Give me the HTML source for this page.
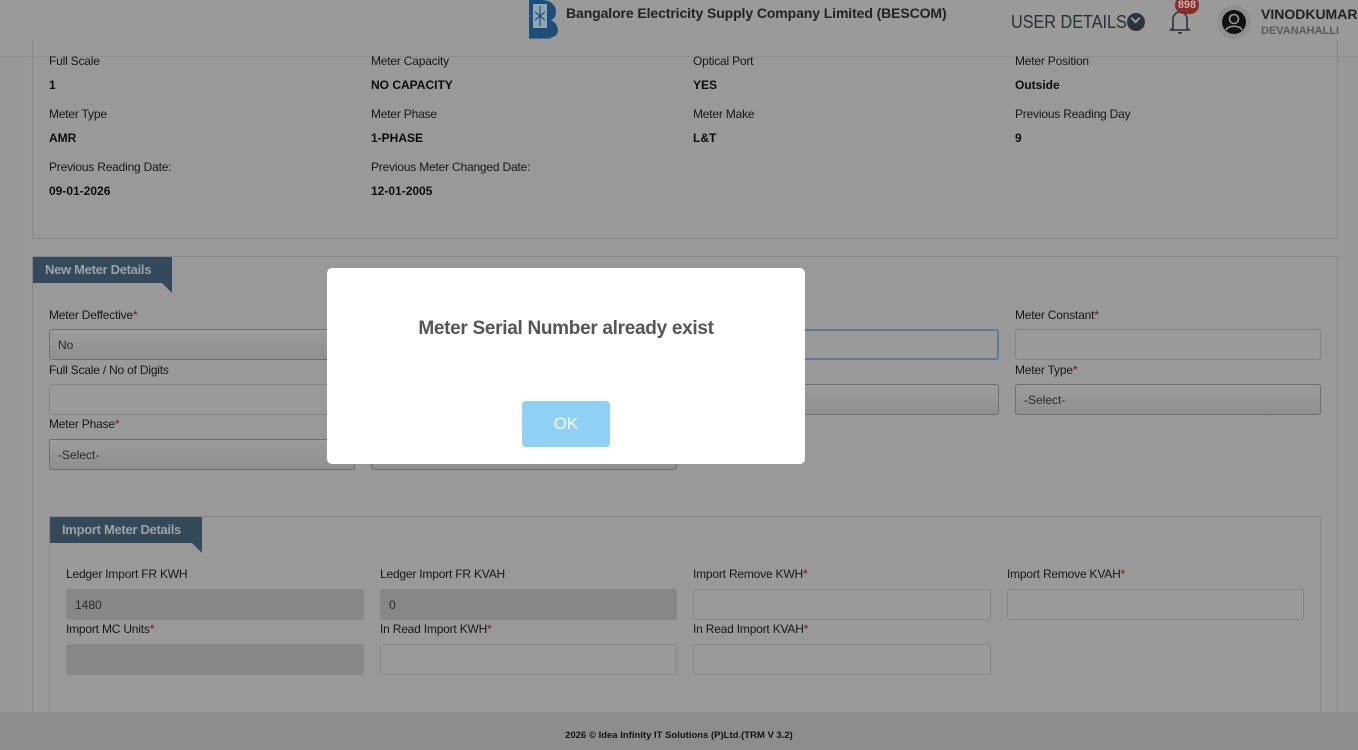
<!DOCTYPE html>
<html style="width:1358px;height:750px;overflow:hidden"><head><meta charset="utf-8"><style>
*{box-sizing:border-box;margin:0;padding:0}
body{width:1358px;height:750px;overflow:hidden;background:#969696;font-family:"Liberation Sans",sans-serif;position:relative;color:#111}
.a{position:absolute}
.lbl{position:absolute;font-size:12px;color:#161616;letter-spacing:-0.2px}
.val{position:absolute;font-size:12px;font-weight:bold;color:#0a0a0a}
.req{color:#7a1010}
.in{position:absolute;height:31px;border:1px solid #858585;border-radius:3px;background:#9a9a9a;font-size:12px;color:#2a2a2a;padding:8px 8px}
.sel{background:linear-gradient(#9c9c9c,#8f8f8f);border-color:#6e6e6e}
.dis{background:#878788;border-color:#878788}
.tab{position:absolute;background:#34495a;color:#9aa3a8;font-weight:bold;font-size:13px;padding:0 12px;height:26px;line-height:26px;letter-spacing:-0.3px}
.tab:after{content:"";position:absolute;right:0;bottom:-10px;border-top:10px solid #34495a;border-left:10px solid transparent}
</style></head><body>
<div class="a" style="left:0;top:0;width:1358px;height:57px;background:#9a9a9a;border-bottom:1px solid #8e8e8e"></div>
<div class="a" style="left:24px;top:57px;width:1320px;height:655px;background:#999"></div>
<div class="a" style="left:32px;top:40px;width:1306px;height:199px;border:1px solid #878787;border-top:none"></div>
<!-- header -->
<svg class="a" style="left:528px;top:0" width="34" height="40" viewBox="0 0 34 40"><path d="M1 0h12c10 0 15 5 15 12c0 4-2 7-5 8c4 2 7 6 7 10c0 6-5 8-12 8H1z" fill="#1c4e78"/><rect x="5" y="4" width="14" height="24" fill="#8fa6b8"/><path d="M12 6v20M7 12l10 8M17 12l-10 8" stroke="#1c4e78" stroke-width="1.2"/><text x="1" y="39" font-size="5" font-weight="bold" fill="#1c4e78" font-family="Liberation Sans">BESCOM</text></svg>
<div class="a" style="left:566px;top:5px;font-size:14px;font-weight:bold;color:#222;letter-spacing:-0.1px">Bangalore Electricity Supply Company Limited (BESCOM)</div>
<div class="a" style="left:1011px;top:12px;font-size:18px;color:#2a2f36;transform:scaleX(0.9);transform-origin:left">USER DETAILS</div>
<div class="a" style="left:1127px;top:13px;width:18px;height:18px;border-radius:50%;background:#2c333a"></div>
<div class="a" style="left:1132px;top:15px;width:7px;height:7px;border-right:2px solid #999;border-bottom:2px solid #999;transform:rotate(45deg)"></div>
<svg class="a" style="left:1168px;top:8px" width="24" height="28" viewBox="0 0 24 28"><path d="M5 20V11a7 7 0 0 1 14 0v9l2 2H3z" fill="none" stroke="#2d333a" stroke-width="1.6"/><path d="M10 24a2 2 0 0 0 4 0" fill="#2d333a"/></svg>
<div class="a" style="left:1175px;top:-4px;width:24px;height:18px;border-radius:9px;background:#8e2a2a;color:#c9b0b0;font-size:11px;font-weight:bold;text-align:center;line-height:18px">898</div>
<div class="a" style="left:1217px;top:5px;width:34px;height:34px;border-radius:50%;background:#909090"></div>
<svg class="a" style="left:1221px;top:9px" width="26" height="26" viewBox="0 0 26 26"><circle cx="13" cy="13" r="12" fill="#111"/><circle cx="13" cy="10" r="4.5" fill="none" stroke="#999" stroke-width="1.6"/><path d="M5 21c2-5 14-5 16 0" fill="none" stroke="#999" stroke-width="1.6"/></svg>
<div class="a" style="left:1261px;top:6px;font-size:14px;font-weight:bold;color:#222">VINODKUMAR</div>
<div class="a" style="left:1261px;top:25px;font-size:11px;font-weight:bold;color:#5a5a5a">DEVANAHALLI</div>
<!-- old meter -->
<div class="lbl" style="left:49px;top:54px">Full Scale</div><div class="val" style="left:49px;top:78px">1</div>
<div class="lbl" style="left:371px;top:54px">Meter Capacity</div><div class="val" style="left:371px;top:78px">NO CAPACITY</div>
<div class="lbl" style="left:693px;top:54px">Optical Port</div><div class="val" style="left:693px;top:78px">YES</div>
<div class="lbl" style="left:1015px;top:54px">Meter Position</div><div class="val" style="left:1015px;top:78px">Outside</div>
<div class="lbl" style="left:49px;top:107px">Meter Type</div><div class="val" style="left:49px;top:131px">AMR</div>
<div class="lbl" style="left:371px;top:107px">Meter Phase</div><div class="val" style="left:371px;top:131px">1-PHASE</div>
<div class="lbl" style="left:693px;top:107px">Meter Make</div><div class="val" style="left:693px;top:131px">L&amp;T</div>
<div class="lbl" style="left:1015px;top:107px">Previous Reading Day</div><div class="val" style="left:1015px;top:131px">9</div>
<div class="lbl" style="left:49px;top:160px">Previous Reading Date:</div><div class="val" style="left:49px;top:184px">09-01-2026</div>
<div class="lbl" style="left:371px;top:160px">Previous Meter Changed Date:</div><div class="val" style="left:371px;top:184px">12-01-2005</div>
<!-- new meter -->
<div class="a" style="left:32px;top:256px;width:1306px;height:470px;border:1px solid #878787"></div>
<div class="tab" style="left:33px;top:257px;width:139px">New Meter Details</div>
<div class="lbl" style="left:49px;top:308px">Meter Deffective<span class="req">*</span></div>
<div class="in sel" style="left:49px;top:329px;width:306px">No</div>
<div class="lbl" style="left:1015px;top:308px">Meter Constant<span class="req">*</span></div>
<div class="in" style="left:1015px;top:329px;width:306px"></div>
<div class="in" style="left:693px;top:329px;width:306px;border:2px solid #5e7a94"></div>
<div class="lbl" style="left:49px;top:363px">Full Scale / No of Digits</div>
<div class="in" style="left:49px;top:384px;width:306px"></div>
<div class="in sel" style="left:693px;top:384px;width:306px"></div>
<div class="lbl" style="left:1015px;top:363px">Meter Type<span class="req">*</span></div>
<div class="in sel" style="left:1015px;top:384px;width:306px">-Select-</div>
<div class="lbl" style="left:49px;top:417px">Meter Phase<span class="req">*</span></div>
<div class="in sel" style="left:49px;top:439px;width:306px">-Select-</div>
<div class="in sel" style="left:371px;top:439px;width:306px"></div>
<!-- import -->
<div class="a" style="left:49px;top:516px;width:1272px;height:210px;border:1px solid #878787"></div>
<div class="tab" style="left:50px;top:517px;width:152px">Import Meter Details</div>
<div class="lbl" style="left:66px;top:567px">Ledger Import FR KWH</div>
<div class="in dis" style="left:66px;top:589px;width:298px">1480</div>
<div class="lbl" style="left:380px;top:567px">Ledger Import FR KVAH</div>
<div class="in dis" style="left:380px;top:589px;width:297px">0</div>
<div class="lbl" style="left:693px;top:567px">Import Remove KWH<span class="req">*</span></div>
<div class="in" style="left:693px;top:589px;width:298px"></div>
<div class="lbl" style="left:1007px;top:567px">Import Remove KVAH<span class="req">*</span></div>
<div class="in" style="left:1007px;top:589px;width:297px"></div>
<div class="lbl" style="left:66px;top:622px">Import MC Units<span class="req">*</span></div>
<div class="in dis" style="left:66px;top:644px;width:298px"></div>
<div class="lbl" style="left:380px;top:622px">In Read Import KWH<span class="req">*</span></div>
<div class="in" style="left:380px;top:644px;width:297px"></div>
<div class="lbl" style="left:693px;top:622px">In Read Import KVAH<span class="req">*</span></div>
<div class="in" style="left:693px;top:644px;width:298px"></div>
<!-- footer -->
<div class="a" style="left:0;top:712px;width:1358px;height:38px;background:#8d8d8d;font-size:9.5px;font-weight:bold;text-align:center;line-height:48px;color:#111">2026 © Idea Infinity IT Solutions (P)Ltd.(TRM V 3.2)</div>
<!-- modal -->
<div class="a" style="left:327px;top:268px;width:478px;height:196px;background:#fff;border-radius:5px"></div>
<div class="a" style="left:327px;top:318px;width:478px;text-align:center;font-size:19px;font-weight:bold;color:#555;letter-spacing:-0.3px">Meter Serial Number already exist</div>
<div class="a" style="left:522px;top:401px;width:88px;height:46px;background:#8fd1f4;border-radius:4px;color:#fff;font-size:17px;text-align:center;line-height:46px">OK</div>
</body></html>
